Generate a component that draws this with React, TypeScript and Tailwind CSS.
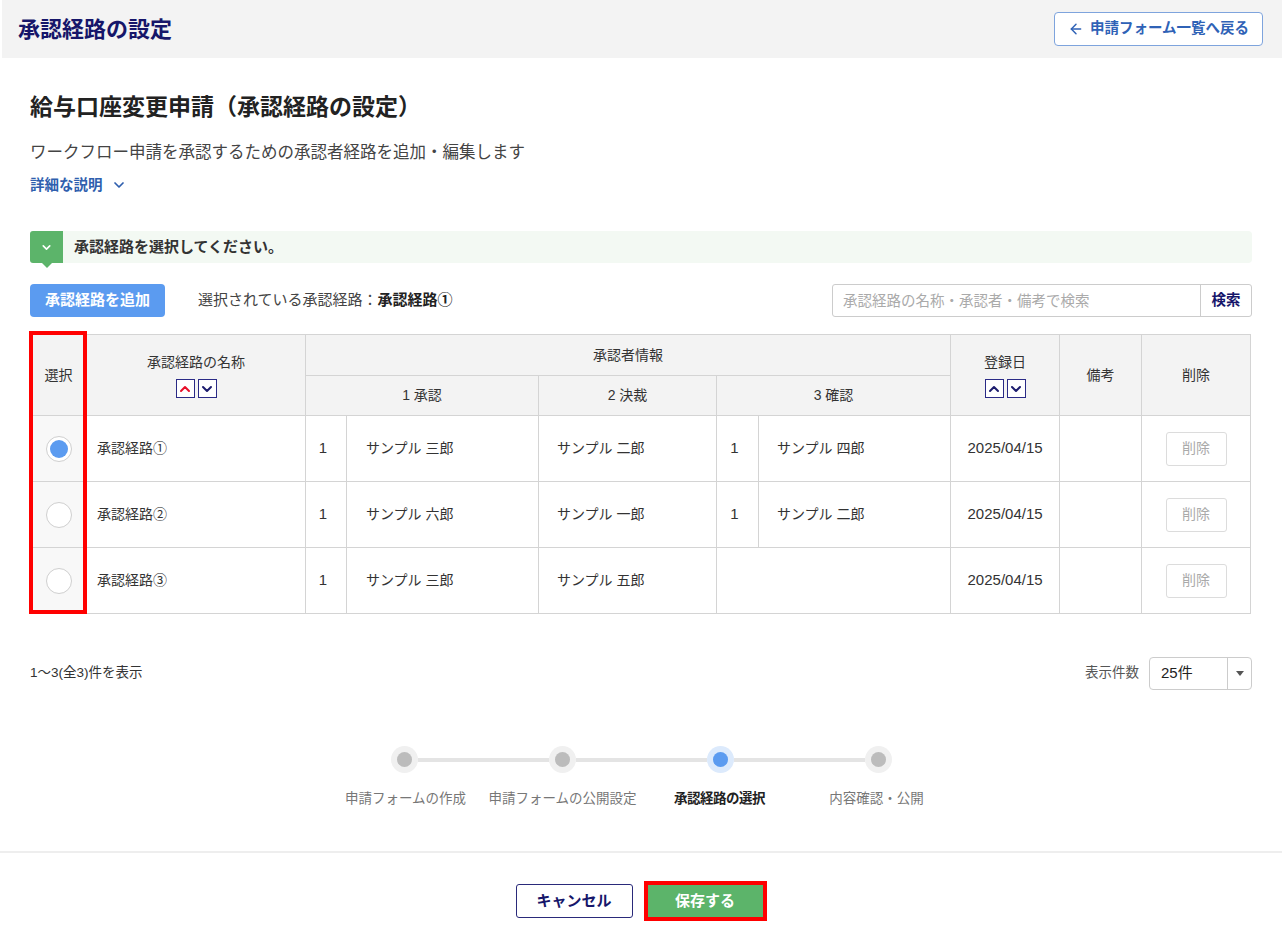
import { ArrowLeft, ChevronDown, ChevronUp } from "lucide-react";

const font = "font-['Liberation_Sans','Noto_Sans_CJK_JP',sans-serif]";

type Row = {
  name: string;
  selected: boolean;
  a1: [string, string];
  a2: string;
  a3: [string, string] | null;
  date: string;
};

const rows: Row[] = [
  { name: "承認経路①", selected: true, a1: ["1", "サンプル 三郎"], a2: "サンプル 二郎", a3: ["1", "サンプル 四郎"], date: "2025/04/15" },
  { name: "承認経路②", selected: false, a1: ["1", "サンプル 六郎"], a2: "サンプル 一郎", a3: ["1", "サンプル 二郎"], date: "2025/04/15" },
  { name: "承認経路③", selected: false, a1: ["1", "サンプル 三郎"], a2: "サンプル 五郎", a3: null, date: "2025/04/15" },
];

const SortButtons = ({ upActive }: { upActive?: boolean }) => (
  <div className="mt-[6px] flex items-center justify-center gap-[3px]">
    <span className="flex h-[19px] w-[19px] items-center justify-center border-[1.5px] border-[#2a2a86] bg-white">
      <ChevronUp size={16} strokeWidth={3} className={upActive ? "text-[#e8102a]" : "text-[#1c1c6e]"} />
    </span>
    <span className="flex h-[19px] w-[19px] items-center justify-center border-[1.5px] border-[#2a2a86] bg-white">
      <ChevronDown size={16} strokeWidth={3} className="text-[#1c1c6e]" />
    </span>
  </div>
);

const steps = ["申請フォームの作成", "申請フォームの公開設定", "承認経路の選択", "内容確認・公開"];

const App = () => {
  return (
    <div className={`${font} min-h-[929px] bg-white text-[#333]`}>
      {/* Header */}
      <header className="ml-[2px] flex h-[58px] items-center justify-between bg-[#f3f3f3] pl-[16px] pr-[19px]">
        <h1 className="text-[22px] font-bold text-[#16166a]">承認経路の設定</h1>
        <button className="flex h-[34px] items-center gap-[6px] rounded-[4px] border border-[#7ea4dd] bg-white px-[13px] text-[14.5px] font-bold text-[#2f62b6]">
          <ArrowLeft size={16} strokeWidth={2.2} />
          申請フォーム一覧へ戻る
        </button>
      </header>

      <main className="px-[30px]">
        <h2 className="mt-[33px] text-[23px] font-bold leading-[32px] text-[#222]">給与口座変更申請（承認経路の設定）</h2>
        <p className="mt-[17px] text-[16.5px] leading-[24px] text-[#444]">
          ワークフロー申請を承認するための承認者経路を追加・編集します
        </p>
        <button className="mt-[11px] flex items-center gap-[8px] text-[14.5px] font-bold leading-[20px] text-[#2f5fae]">
          詳細な説明
          <ChevronDown size={16} strokeWidth={2.6} />
        </button>

        {/* Notice bar */}
        <div className="mt-[36px] flex h-[32px] items-center rounded-[4px] bg-[#f3f9f3]">
          <div className="relative flex h-full w-[33px] items-center justify-center rounded-l-[3px] bg-[#5cb46a]">
            <ChevronDown size={13} strokeWidth={3} className="text-white" />
            <span className="absolute -bottom-[5px] left-[12px] h-0 w-0 border-x-[5px] border-t-[5px] border-x-transparent border-t-[#5cb46a]" />
          </div>
          <span className="ml-[11px] text-[15px] font-bold text-[#333]">承認経路を選択してください。</span>
        </div>

        {/* Toolbar */}
        <div className="mt-[21px] flex h-[33px] items-center">
          <button className="h-full rounded-[4px] bg-[#5b9bf0] px-[15px] text-[15px] font-bold text-white">承認経路を追加</button>
          <span className="ml-[33px] text-[15px] text-[#444]">
            選択されている承認経路：<span className="font-bold text-[#222]">承認経路①</span>
          </span>
          <div className="ml-auto flex h-full w-[420px] rounded-[3px] border border-[#ccc]">
            <input
              className="h-full flex-1 px-[10px] text-[14.5px] text-[#333] outline-none placeholder:text-[#aaa]"
              placeholder="承認経路の名称・承認者・備考で検索"
            />
            <button className="h-full w-[51px] border-l border-[#ccc] text-[14.5px] font-bold text-[#16166a]">検索</button>
          </div>
        </div>

        {/* Table */}
        <div className="relative mt-[17px]">
          <table className="w-[1220px] table-fixed border-collapse text-[14px]">
            <colgroup>
              <col className="w-[56px]" />
              <col className="w-[219px]" />
              <col className="w-[41px]" />
              <col className="w-[192px]" />
              <col className="w-[178px]" />
              <col className="w-[42px]" />
              <col className="w-[192px]" />
              <col className="w-[109px]" />
              <col className="w-[82px]" />
              <col className="w-[109px]" />
            </colgroup>
            <thead className="bg-[#f3f3f3] text-[#333]">
              <tr className="h-[41px]">
                <th rowSpan={2} className="border border-[#d4d4d4] font-normal">選択</th>
                <th rowSpan={2} className="border border-[#d4d4d4] font-normal">
                  承認経路の名称
                  <SortButtons upActive />
                </th>
                <th colSpan={5} className="border border-[#d4d4d4] font-normal">承認者情報</th>
                <th rowSpan={2} className="border border-[#d4d4d4] font-normal">
                  登録日
                  <SortButtons />
                </th>
                <th rowSpan={2} className="border border-[#d4d4d4] font-normal">備考</th>
                <th rowSpan={2} className="border border-[#d4d4d4] font-normal">削除</th>
              </tr>
              <tr className="h-[40px]">
                <th colSpan={2} className="border border-[#d4d4d4] font-normal">1 承認</th>
                <th className="border border-[#d4d4d4] font-normal">2 決裁</th>
                <th colSpan={2} className="border border-[#d4d4d4] font-normal">3 確認</th>
              </tr>
            </thead>
            <tbody className="text-[#333]">
              {rows.map((r) => (
                <tr key={r.name} className="h-[66px]">
                  <td className="border border-[#d4d4d4] bg-[#f8f8f8]">
                    <div className="flex justify-center">
                      <span className="flex h-[26px] w-[26px] items-center justify-center rounded-full border border-[#cfcfcf] bg-white">
                        {r.selected && <span className="h-[18px] w-[18px] rounded-full bg-[#5b9bf0]" />}
                      </span>
                    </div>
                  </td>
                  <td className="border border-[#d4d4d4] pl-[10px]">{r.name}</td>
                  <td className="border border-[#d4d4d4] pr-[6px] text-center text-[15px]">{r.a1[0]}</td>
                  <td className="border border-[#d4d4d4] pl-[19px]">{r.a1[1]}</td>
                  <td className="border border-[#d4d4d4] pl-[18px]">{r.a2}</td>
                  {r.a3 ? (
                    <>
                      <td className="border border-[#d4d4d4] pr-[6px] text-center text-[15px]">{r.a3[0]}</td>
                      <td className="border border-[#d4d4d4] pl-[18px]">{r.a3[1]}</td>
                    </>
                  ) : (
                    <td colSpan={2} className="border border-[#d4d4d4]" />
                  )}
                  <td className="border border-[#d4d4d4] text-center text-[15px]">{r.date}</td>
                  <td className="border border-[#d4d4d4]" />
                  <td className="border border-[#d4d4d4]">
                    <div className="flex justify-center">
                      <button className="h-[34px] w-[61px] rounded-[3px] border border-[#dcdcdc] bg-white text-[14px] text-[#aaa]">削除</button>
                    </div>
                  </td>
                </tr>
              ))}
            </tbody>
          </table>
          {/* Highlight on the select column */}
          <div className="pointer-events-none absolute -left-[1px] -top-[3px] h-[283px] w-[58px] border-[4px] border-[#ff0000]" />
        </div>

        {/* Pager */}
        <div className="mt-[43px] flex items-center justify-between">
          <span className="text-[13.5px] text-[#333]">1〜3(全3)件を表示</span>
          <div className="flex items-center gap-[10px]">
            <span className="text-[13.5px] text-[#555]">表示件数</span>
            <div className="flex h-[33px] w-[103px] items-center rounded-[4px] border border-[#ccc]">
              <span className="flex-1 pl-[11px] text-[15px] text-[#222]">25件</span>
              <span className="flex h-full w-[24px] items-center justify-center border-l border-[#ccc]">
                <span className="h-0 w-0 border-x-[4.5px] border-t-[5px] border-x-transparent border-t-[#555]" />
              </span>
            </div>
          </div>
        </div>

        {/* Stepper */}
        <div className="mt-[56px] flex flex-col items-center">
          <div className="flex items-center">
            {steps.map((s, i) => (
              <div key={s} className="flex items-center">
                {i > 0 && <span className="h-[4px] w-[131px] bg-[#e4e4e4]" />}
                <span
                  className={`flex h-[27px] w-[27px] items-center justify-center rounded-full ${i === 2 ? "bg-[#dceafc]" : "bg-[#f0f0f0]"}`}
                >
                  <span className={`h-[15px] w-[15px] rounded-full ${i === 2 ? "bg-[#5b9bf0]" : "bg-[#bcbcbc]"}`} />
                </span>
              </div>
            ))}
          </div>
          <div className="mt-[16px] flex">
            {steps.map((s, i) => (
              <span
                key={s}
                className={`w-[157px] text-center text-[13.5px] ${i === 2 ? "font-bold tracking-[-0.5px] text-[#222]" : "text-[#777]"}`}
              >
                {s}
              </span>
            ))}
          </div>
        </div>
      </main>

      {/* Footer actions */}
      <footer className="mt-[42px] border-t-2 border-[#eeeeee]">
        <div className="flex items-center justify-center gap-[11px] pt-[28px] pb-[8px]">
          <button className="h-[34px] w-[117px] rounded-[3px] border border-[#2a2a7a] bg-white text-[15px] font-bold text-[#16166a]">
            キャンセル
          </button>
          <div className="border-[4px] border-[#ff0000]">
            <button className="h-[32px] w-[115px] bg-[#5cb46a] text-[15px] font-bold text-white">保存する</button>
          </div>
        </div>
      </footer>
    </div>
  );
};

export default App;
